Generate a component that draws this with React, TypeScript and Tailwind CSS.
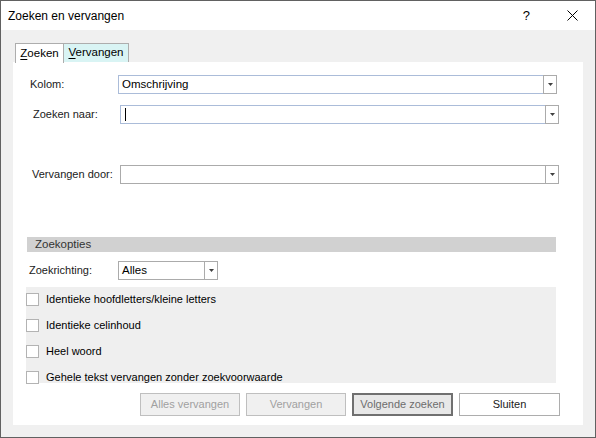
import React from "react";

const Arrow = () => (
  <svg width="5" height="3" viewBox="0 0 5 3" className="block">
    <polygon points="0,0 5,0 2.5,3" fill="#404040" />
  </svg>
);

function Combo({
  width,
  text,
  blue,
  cursor,
}: {
  width: number;
  text?: string;
  blue?: boolean;
  cursor?: boolean;
}) {
  return (
    <div className="flex h-[19px] shrink-0" style={{ width }}>
      <div
        className={
          "flex-1 flex items-center pl-[3px] bg-white border-y border-l " +
          (blue ? "border-[#abbcd9]" : "border-[#ababab]")
        }
      >
        {cursor ? <div className="w-px h-[13px] bg-black ml-px" /> : null}
        {text ? <span className="text-[11.5px] leading-none text-black">{text}</span> : null}
      </div>
      <div className="w-[14px] flex items-center justify-center bg-white border border-[#ababab]">
        <Arrow />
      </div>
    </div>
  );
}

function Check({ label }: { label: string }) {
  return (
    <div className="flex items-center h-[13px]">
      <div className="w-[13px] h-[13px] bg-white border border-[#b3b3b3]" />
      <span className="ml-[7px] text-[11px] leading-none text-black whitespace-nowrap">{label}</span>
    </div>
  );
}

export default function App() {
  return (
    <div
      className="w-[596px] h-[438px] border border-[#616161] bg-[#f0f0f0] flex flex-col overflow-hidden whitespace-nowrap"
      style={{ fontFamily: '"Liberation Sans", Arial, sans-serif' }}
    >
      {/* Title bar */}
      <div className="h-[29px] bg-white flex items-center">
        <span className="ml-[7px] text-[12px] text-black leading-none">Zoeken en vervangen</span>
        <div className="flex-1" />
        <span className="text-[13px] text-black leading-none mr-[37px]">?</span>
        <svg width="11" height="11" viewBox="0 0 11 11" className="mr-[17px]">
          <path d="M0.5 0.5 L10.5 10.5 M10.5 0.5 L0.5 10.5" stroke="#000" strokeWidth="1" />
        </svg>
      </div>

      {/* Body */}
      <div className="flex flex-col pl-[12px]">
        {/* Tabs */}
        <div className="flex mt-[13px] ml-[2px] h-[19px]">
          <div className="w-[49px] h-[20px] bg-white border-t border-l border-r border-[#adadad] flex items-center justify-center z-10">
            <span className="text-[11.5px] leading-none text-black">
              <span className="underline underline-offset-2">Z</span>oeken
            </span>
          </div>
          <div className="w-[65px] h-[19px] bg-[#d9f4f4] border-t border-r border-[#adadad] flex items-center justify-center">
            <span className="text-[11.5px] leading-none text-black">
              <span className="underline underline-offset-2">V</span>ervangen
            </span>
          </div>
        </div>

        {/* Panel */}
        <div className="w-[570px] h-[363px] bg-white flex flex-col">
          {/* Kolom */}
          <div className="flex items-center mt-[13px]">
            <span className="w-[105px] pl-[17px] text-[11px] text-[#1a1a1a] leading-none">Kolom:</span>
            <Combo width={439} text="Omschrijving" blue />
          </div>
          {/* Zoeken naar */}
          <div className="flex items-center mt-[11px]">
            <span className="w-[107px] pl-[20px] text-[11px] text-[#1a1a1a] leading-none">Zoeken naar:</span>
            <Combo width={439} blue cursor />
          </div>
          {/* Vervangen door */}
          <div className="flex items-center mt-[41px]">
            <span className="w-[107px] pl-[19px] text-[11px] text-[#1a1a1a] leading-none">Vervangen door:</span>
            <Combo width={439} />
          </div>

          {/* Zoekopties header */}
          <div className="mt-[53px] ml-[14px] w-[529px] h-[15px] bg-[#d1d1d1] flex items-center">
            <span className="ml-[8px] text-[11.5px] leading-none text-[#333333]">Zoekopties</span>
          </div>

          {/* Zoekrichting */}
          <div className="flex items-center mt-[9px]">
            <span className="w-[105px] pl-[16px] text-[11px] text-[#1a1a1a] leading-none">Zoekrichting:</span>
            <Combo width={100} text="Alles" />
          </div>

          {/* Options */}
          <div className="mt-[7px] ml-[13px] w-[530px] h-[96px] bg-[#efefef] flex flex-col pt-[6px] gap-[13px]">
            <Check label="Identieke hoofdletters/kleine letters" />
            <Check label="Identieke celinhoud" />
            <Check label="Heel woord" />
            <Check label="Gehele tekst vervangen zonder zoekvoorwaarde" />
          </div>

          {/* Buttons */}
          <div className="flex mt-[10px] ml-[127px] gap-[6px]">
            <div className="w-[100px] h-[23px] border border-[#bfbfbf] bg-[#f0f0f0] flex items-center justify-center text-[11px] leading-none text-[#a0a0a0]">
              Alles vervangen
            </div>
            <div className="w-[100px] h-[23px] border border-[#bfbfbf] bg-[#f0f0f0] flex items-center justify-center text-[11px] leading-none text-[#a0a0a0]">
              Vervangen
            </div>
            <div className="w-[101px] h-[23px] border-2 border-[#707070] bg-[#e8e8e8] flex items-center justify-center text-[11px] leading-none text-[#6d6d6d]">
              Volgende zoeken
            </div>
            <div className="w-[101px] h-[23px] border border-[#adadad] bg-white flex items-center justify-center text-[11px] leading-none text-[#1a1a1a]">
              Sluiten
            </div>
          </div>
        </div>
      </div>
    </div>
  );
}
